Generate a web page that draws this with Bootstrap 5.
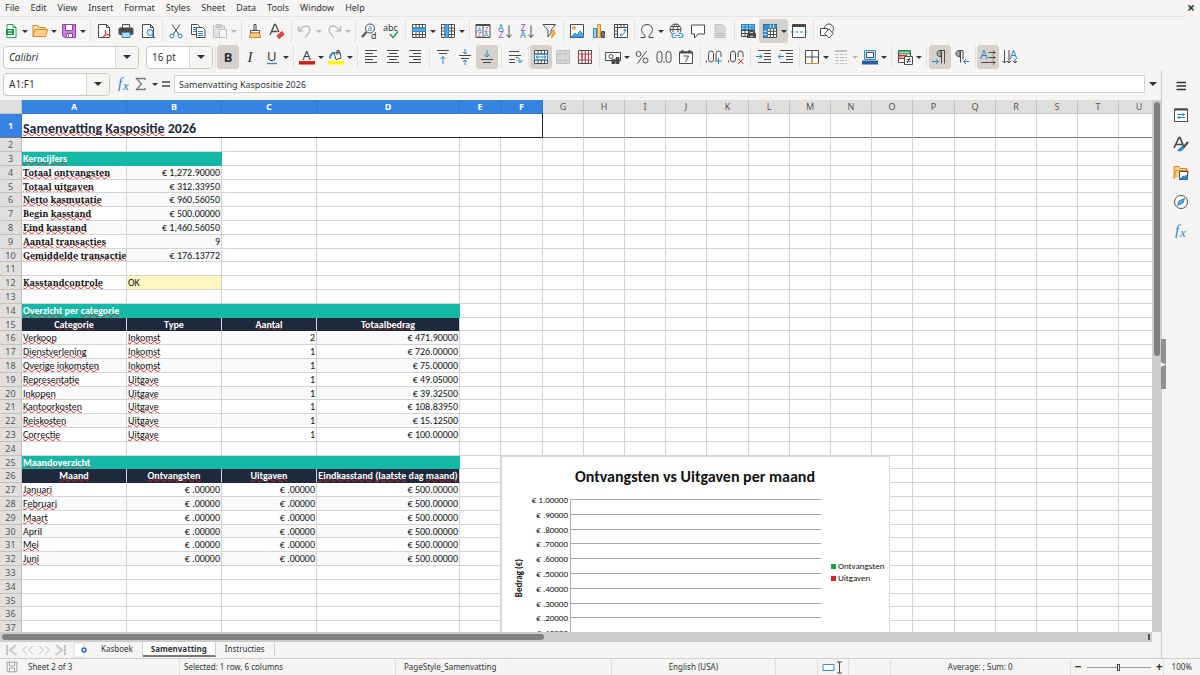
<!DOCTYPE html>
<html lang="nl">
<head>
<meta charset="utf-8">
<meta name="viewport" content="width=device-width, initial-scale=1">
<title>Kasboek - Samenvatting</title>
<link rel="stylesheet" href="https://cdn.jsdelivr.net/npm/bootstrap@5.3.0/dist/css/bootstrap.min.css">
<style>
:root{--ui:#f6f5f4;--line:#d9d6d3;--sel:#3584e4;--teal:#14b8a6;--navy:#1e293b}
body{height:100vh;overflow:hidden;background:var(--ui);color:#2e3436;font:9px/14px "Noto Sans",sans-serif}
button,input{font:inherit;color:inherit}
.menubar,.strip,.formulabar,.hbar,.tabs,.status{flex:none}
.menubar{height:17px;margin:0 16px 1px 0;border-bottom:1px solid #e4e2e0;gap:1px}
.menubar a{color:#2e3436;text-decoration:none;padding:0 5px}
.closer{right:5px;top:2px;border:0;background:none;font-weight:700;font-size:14px;line-height:12px;padding:0}
.strip{height:26px}
.tb{width:22px;height:24px;padding:0;border:0;background:none;display:flex;align-items:center;justify-content:center;flex:none;border-radius:3px}
.tb.split{width:29px;padding-left:3px;justify-content:flex-start}
.tb.split::after,.arrow::after{content:"";border:3px solid transparent;border-top-color:#2e3436;border-bottom:0;margin-left:3px}
.tb.off{opacity:.3}
.tb.on{background:#d5d1cd}
.sp{width:6px;flex:none;display:flex;justify-content:center}
.sp::before{content:"";width:1px;height:22px;background:#e4e2e0}
.sp.slim{width:4px}
.ic{width:16px;height:16px;fill:none;stroke:#4a4a4a;stroke-width:1;flex:none;overflow:visible}
symbol text{stroke:none;fill:#3a3a3a;font-family:"Noto Sans",sans-serif}
.letter-b{font-size:13px;line-height:20px}
.letter-i{font:italic 15px/20px "Liberation Serif",serif}
.combo{height:23px;border:1px solid #cdc7c2;border-radius:4px;background:#fff;overflow:hidden;font-size:10px}
.combo input{border:0;min-width:0;padding:0 5px;outline:0;background:none}
.arrow{width:23px;border:0;border-left:1px solid #dcd8d4;background:var(--ui);padding:0;display:flex;align-items:center;justify-content:center;flex:none}
.arrow::after{border-width:4px;border-bottom:0;margin:0}
.fontbox{width:136px;margin:0 7px 0 3px}.sizebox{width:67px}.namebox{width:107px;margin:0 5px 0 3px}
.formula{height:18px;border:1px solid #d5d1cd;background:#fff;padding:0 4px;outline:0;min-width:0}
.formulabar{height:30px;padding-bottom:2px}
.formulabar .tb{width:18px}
.formulabar .tb.split{width:25px;padding-left:0}
.formulabar .expand{width:16px;border:0}
.side{width:39px;border-left:1px solid #cfccc8;padding-top:4px}
.side .tb{width:24px;height:24px}
.side .tb+.tb{margin-top:5px}
.grip{left:-1px;top:269px;width:5px;height:50px;background:#8f8f8f;color:#fff;font-size:6px;line-height:50px}
.gridbox{background:#fff}
table.cells{table-layout:fixed;border-collapse:separate;border-spacing:0;width:1160px;font:10px/12px Carlito,Lato,sans-serif;color:#111}
.cells th,.cells td{padding:0 1px;height:14px;border-right:1px solid #d4d4d4;border-bottom:1px solid #d4d4d4;white-space:nowrap;overflow:hidden}
.cells tbody th,.cells tbody td{padding-top:1px}
.cells tbody tr:nth-child(5n)>*{height:13px;line-height:11px}
.cells th{background:#e1dfdd;color:#555;font:9px/12px "Noto Sans",sans-serif;text-align:center;border-color:#c3c0bd}
.cells th.hot{background:var(--sel);color:#fff;font-weight:700;border-color:#2f76cc}
.cells tbody tr:first-child>*{height:24px;border-bottom:1px solid #777}
.cells tbody td.title{font:700 14px/16px Carlito,Lato,sans-serif;color:var(--navy);padding-top:7px;border-right:1px solid #222;border-bottom-color:#222}
.cells td.sec{background:var(--teal);color:#fff;font-weight:700;border-color:var(--teal)}
.cells tbody td.head{background:var(--navy);color:#fff;font-weight:700;text-align:center;border-bottom-color:var(--navy);padding-top:0}
.cells td.lab{font-family:"Noto Serif",serif;font-weight:700;font-size:9px}
.cells td.num{text-align:right}
.cells td.band{background:#f8fafc}
.cells td.ok{background:#fef9c3}
.typo{text-decoration:underline wavy #dc2626 1px;text-underline-offset:-1px;text-decoration-skip-ink:none}
.plot{left:501px;top:356px;width:389px;height:220px;background:#fff;border:1px solid #d9d9d9}
.plot svg{display:block;font-family:Carlito,Lato,sans-serif;font-size:9px}
.vbar{width:9px;background:#cdcdcd;padding:2px 1px 0 2px}
.vbar div{height:48%;background:#808080;border-radius:3px}
.hbar{height:10px;background:#cdcdcd;padding:2px;margin-right:9px}
.hbar div{width:542px;background:#808080;border-radius:3px}
.hbar span{width:2px;background:#555}
.tabs{height:16px;font-size:8px}
.tabs a{color:#2e3436;text-decoration:none;padding:0 9px;border-right:1px solid #d0cdca;line-height:14px;height:14px}
.tabs a.cur{background:#fff;font-weight:700;padding:0 8px;border-bottom:2px solid #777;height:15px}
.status{height:17px;border-top:1px solid #d0cdca;line-height:16px;font-size:8px}
.status>span,.status>div{border-right:1px solid #e0dedb}
.zoomer{width:64px;height:12px;appearance:none;background:none;margin:0 5px}
.zoomer::-webkit-slider-runnable-track{height:1px;background:#999}
.zoomer::-webkit-slider-thumb{appearance:none;width:3px;height:7px;margin-top:-3px;background:#fff;border:1px solid #444}
.zb{border:0;background:none;padding:0;font-size:12px;font-weight:700}
.w-sheet{flex:0 0 13%}.w-sel{flex:0 0 18%}.w-style{flex:0 0 18%}.w-sum{flex:0 0 15%}.w-gap{flex:0 0 42px}.w-mode{flex:0 0 31px}
</style>
</head>
<body class="d-flex flex-column">
<svg class="d-none">
<symbol id="new" viewBox="0 0 16 16"><path d="M4 1.500h6l3 3v10H4zM10 1.500v3h3" stroke="#2ca05a" fill="#fff"/><path d="M3.500 6.500h7v5h-7zM3.500 9h7" fill="#2ca05a" stroke="#188a43"/><path d="M5 7.800h4M5 10.300h4" stroke="#fff"/></symbol>
<symbol id="open" viewBox="0 0 16 16"><path d="M1 13.500V2.500h5l1 2h6v2" stroke="#d98a2b" fill="#fbe0b0"/><path d="M1 13.500l2-7h12.500l-2 7z" stroke="#d98a2b" fill="#fccf86"/></symbol>
<symbol id="save" viewBox="0 0 16 16"><path d="M1.500 1.500h13v13h-11l-2-2z" stroke="#9340ad" fill="#c783dd"/><path d="M4.500 1.500h7v6h-7zM5.500 10.500h6v4h-6z" stroke="#9340ad" fill="#fff"/><path d="M7.500 11.500v2"/></symbol>
<symbol id="pdf" viewBox="0 0 16 16"><path d="M2.500 1.500h8l3 3v10h-11zM10.500 1.500v3h3" fill="#fff"/><path d="M7 14c3-3 3-5 2.500-7-1 3 2 5 5 5-3-.5-5 0-7.500 2z" stroke="#dc3545" fill="#fff"/></symbol>
<symbol id="print" viewBox="0 0 16 16"><path d="M4.500 5V1.500h7V5" fill="#fff"/><rect x="1" y="5" width="14" height="6.500" rx="1" fill="#4a4a4a"/><path d="M4 9.500h8v5H4z" stroke="#3b8fc9" fill="#b8dcf2"/></symbol>
<symbol id="preview" viewBox="0 0 16 16"><path d="M2.500 1.500h8l3 3v10h-11zM10.500 1.500v3h3" fill="#fff"/><circle cx="10" cy="9.500" r="3" stroke="#2b86c5" fill="#d8ecf9"/><path d="M12 12l3 3" stroke="#2b86c5" stroke-width="1.500"/></symbol>
<symbol id="cut" viewBox="0 0 16 16"><path d="M4 1.500l7 10M12 1.500L5 11.500"/><circle cx="4" cy="13" r="2" stroke="#2b86c5"/><circle cx="12" cy="13" r="2" stroke="#2b86c5"/></symbol>
<symbol id="copy" viewBox="0 0 16 16"><path d="M1.500 1.500h6l2 2v8h-8z" fill="#fff"/><path d="M3 4.500h4M3 6.500h3M3 8.500h3" stroke="#2b86c5"/><path d="M6.500 4.500h6l2.500 2.500v7.500H6.500z" fill="#fff"/><path d="M8 8.500h5M8 10.500h5M8 12.500h5" stroke="#2b86c5"/></symbol>
<symbol id="paste" viewBox="0 0 16 16"><path d="M1.500 3h11v11.500h-11zM4.500 1.500h5v3h-5z" fill="#bbb"/><path d="M7.500 6.500h7v8h-7z" fill="#fff"/></symbol>
<symbol id="brush" viewBox="0 0 16 16"><path d="M7 1.500h2v6H7zM3.500 7.500h9v2.500h-9z" fill="#fff"/><path d="M3.500 10h9l1 4.500H2.500z" stroke="#d98a2b" fill="#fccf86"/></symbol>
<symbol id="clear" viewBox="0 0 16 16"><path d="M1 12L5.500 1.500h1L10 9M2.500 8.500h6" stroke-width="1.300"/><path d="M8 12.500l5-4 2 3-5 4z" fill="#e04848" stroke="#dc3545"/></symbol>
<symbol id="undo" viewBox="0 0 16 16"><path d="M1.500 3v5h5M1.500 8L6 4c3-2 7-1 7 3 0 2-2 4-5 7.500" stroke-width="1.500"/></symbol>
<symbol id="redo" viewBox="0 0 16 16"><path d="M14.500 3v5h-5M14.500 8L10 4C7 2 3 3 3 7c0 2 2 4 5 7.500" stroke-width="1.500"/></symbol>
<symbol id="find" viewBox="0 0 16 16"><circle cx="9" cy="5.500" r="4.500" fill="#fff"/><path d="M5.500 9L1 14" stroke-width="2"/><text x="6.500" y="8" font-size="8" style="fill:#2b86c5">a</text><text x="10" y="15.500" font-size="9">d</text></symbol>
<symbol id="abc" viewBox="0 0 16 16"><text x="0" y="8" font-size="9">abc</text><path d="M7 11l3 3.500 5-6" stroke="#2ca05a" stroke-width="1.500"/></symbol>
<symbol id="row" viewBox="0 0 16 16"><path d="M1.500 1.500h13v13h-13zM1.500 5h13M1.500 11.500h13M5 1.500v13M8.300 1.500v13M11.500 1.500v13M1.500 8h13" fill="#fff"/><path d="M1.500 5h13v3.500h-13z" fill="#5aa9dd" stroke="#2b86c5"/></symbol>
<symbol id="col" viewBox="0 0 16 16"><path d="M1.500 1.500h13v13h-13zM1.500 5h13M1.500 11.500h13M5 1.500v13M8.300 1.500v13M11.500 1.500v13M1.500 8h13" fill="#fff"/><path d="M5 1.500h3.500v13H5z" fill="#5aa9dd" stroke="#2b86c5"/></symbol>
<symbol id="sort" viewBox="0 0 16 16"><path d="M1 1.500h14v13H1zM8 1.500v13" fill="#fff"/><path d="M1 2h14" stroke-width="2"/><text x="2" y="9" font-size="7" style="fill:#2b86c5">A</text><text x="2.500" y="14.200" font-size="7" style="fill:#a347ba">Z</text><text x="9.500" y="9" font-size="7" style="fill:#a347ba">Z</text><text x="9" y="14.200" font-size="7" style="fill:#2b86c5">A</text></symbol>
<symbol id="az" viewBox="0 0 16 16"><text x="1" y="7.500" font-size="9" style="fill:#2b86c5">A</text><text x="1.500" y="15" font-size="9" style="fill:#a347ba">Z</text><path d="M12 2.500v12M9.500 11.500l2.500 3 2.500-3"/></symbol>
<symbol id="za" viewBox="0 0 16 16"><text x="1.500" y="7.500" font-size="9" style="fill:#a347ba">Z</text><text x="1" y="15" font-size="9" style="fill:#2b86c5">A</text><path d="M12 2.500v12M9.500 11.500l2.500 3 2.500-3"/></symbol>
<symbol id="filter" viewBox="0 0 16 16"><path d="M2 1.500h12.500L10 7v3l-3 4V7z" fill="#fff"/><path d="M12 7l-3 4h2.500l-1 4 4-5H12l1.500-3z" stroke="#d98a2b" fill="#fccf86"/></symbol>
<symbol id="image" viewBox="0 0 16 16"><path d="M1.500 1.500h13v13h-13z" fill="#fff"/><path d="M2 14l4-4 2 2 3-4 3.500 4v2z" fill="#5aa9dd" stroke="#2b86c5"/><circle cx="5" cy="5" r="1.300" stroke="#d98a2b" fill="#fccf86"/></symbol>
<symbol id="chart" viewBox="0 0 16 16"><path d="M2.500 5.500h3v9h-3z" stroke="#2b86c5" fill="#9fcdec"/><path d="M6.500 1.500h3v13h-3z" stroke="#d98a2b" fill="#fccf86"/><path d="M10.500 8.500h3v6h-3z" fill="#777"/></symbol>
<symbol id="pivot" viewBox="0 0 16 16"><path d="M1.500 1.500h13v13h-13zM1.500 4.500h13M4.500 1.500v13M8 1.500v3M11 1.500v3M1.500 8h3M1.500 11h3" fill="#fff"/><path d="M7 12c4 0 5-2 5-5M10.500 8l1.500-2 1.500 2M8.500 10.500L7 12l1.500 1.500" stroke="#2b86c5"/></symbol>
<symbol id="omega" viewBox="0 0 16 16"><path d="M1.500 14.500H6V12.500C.5 9 2 1.500 8 1.500S15.500 9 10 12.500v2h4.500"/></symbol>
<symbol id="link" viewBox="0 0 16 16"><circle cx="7.500" cy="6.500" r="5.500"/><path d="M2 6.500h11M3 3.500h9M7.500 1C4 5 4 9 7.500 12M7.500 1C11 5 11 9 7.500 12"/><path d="M5 9.500h11v6H3z" fill="#f6f5f4" stroke="none"/><path d="M7.500 10.500H6a2 2 0 000 4h2.500M11 10.500h2a2 2 0 010 4h-2.500M7 12.500h5" stroke="#3b9be0" stroke-width="1.200"/></symbol>
<symbol id="note" viewBox="0 0 16 16"><path d="M1.500 2h13v9H8l-3.500 4v-4h-3z" fill="#fff"/></symbol>
<symbol id="hf" viewBox="0 0 16 16"><path d="M3 1.500h7l3 3v10H3zM5 10.500h6v2H5z" fill="#999"/></symbol>
<symbol id="area" viewBox="0 0 16 16"><path d="M1.500 1.500h13v12h-13zM1.500 4.500h13M1.500 7.500h13M1.500 10.500h13M5 1.500v12M8.500 1.500v12M12 1.500v12" fill="#fff"/><path d="M1.500 1.500h13v5h-13z" fill="#8cc4ea" stroke="#2b86c5"/><path d="M5 1.500v5M8.500 1.500v5M12 1.500v5M1.500 4h13" stroke="#2b86c5"/><path d="M7.500 10.500h8v4h-8z" fill="#4a4a4a"/><path d="M9.500 8.500h4v2h-4zM9.500 12.500h4v2h-4z" fill="#b8dcf2"/></symbol>
<symbol id="freeze" viewBox="0 0 16 16"><path d="M1.500 1.500h13v13h-13zM1.500 5h13M1.500 8.300h13M1.500 11.500h13M5 1.500v13M8.300 1.500v13M11.500 1.500v13" fill="#fff"/><path d="M1.500 1.500h13V5H5v9.500H1.500z" fill="#3b94d2" stroke="#2173ae"/><path d="M1.500 8.300H5M1.500 11.500H5M8.300 1.500V5M11.500 1.500V5" stroke="#cfe6f5"/></symbol>
<symbol id="split" viewBox="0 0 16 16"><path d="M1.500 1.500h13v13h-13z" fill="#fff"/><path d="M1.500 2.500h13" stroke-width="3"/><path d="M0 9h16" stroke="#2b86c5" stroke-dasharray="3 1.500"/></symbol>
<symbol id="shapes" viewBox="0 0 16 16"><circle cx="10" cy="5.500" r="4.500" fill="#fff"/><path d="M1.500 5.500h7v7h-7z" fill="#fff"/><path d="M10 6l4.300 4.500L10 15l-4.300-4.500z" fill="#fff"/></symbol>
<symbol id="ul" viewBox="0 0 16 16"><text x="3" y="12" font-size="13">U</text><path d="M3 14.500h10" stroke="#3b8fd0" stroke-width="1.500"/></symbol>
<symbol id="fc" viewBox="0 0 16 16"><text x="3.500" y="10.500" font-size="13">A</text><path d="M0 13.800h16" stroke="#c9211e" stroke-width="3.500"/></symbol>
<symbol id="hl" viewBox="0 0 16 16"><path d="M6 4l6-1 1 6-5 1.500z" fill="#fff"/><path d="M9 6V1.500h2V5"/><path d="M2 9.500c0-5 3-6 5-5" stroke="#2b86c5" stroke-width="2"/><path d="M0 13.800h16" stroke="#ff0" stroke-width="3.500"/></symbol>
<symbol id="left" viewBox="0 0 16 16"><path d="M2 1.500h12M2 4.500h8M2 7.500h12M2 10.500h8M2 13.500h12"/></symbol>
<symbol id="center" viewBox="0 0 16 16"><path d="M2 1.500h12M4 4.500h8M2 7.500h12M4 10.500h8M2 13.500h12"/></symbol>
<symbol id="right" viewBox="0 0 16 16"><path d="M2 1.500h12M6 4.500h8M2 7.500h12M6 10.500h8M2 13.500h12"/></symbol>
<symbol id="top" viewBox="0 0 16 16"><path d="M2 1.500h12M4 4.500h8"/><path d="M8 15V7.500M5.500 10L8 7.500l2.500 2.500" stroke="#2b86c5"/></symbol>
<symbol id="mid" viewBox="0 0 16 16"><path d="M2 6.500h12M4 9.500h8"/><path d="M8 0v5M6 3l2 2 2-2M8 16v-5M6 13l2-2 2 2" stroke="#2b86c5"/></symbol>
<symbol id="bot" viewBox="0 0 16 16"><path d="M2 10.500h12M4 13.500h8"/><path d="M8 1v7M5.500 5.500L8 8l2.500-2.500" stroke="#2b86c5"/></symbol>
<symbol id="wrap" viewBox="0 0 16 16"><path d="M2 2.500h10M2 6.500h12M2 10.500h6M2 13.500h6"/><path d="M9 8.500c3 0 4 1 4 4M10.500 11l2.500 3 2.500-3" stroke="#2b86c5"/></symbol>
<symbol id="merge" viewBox="0 0 16 16"><path d="M1.500 1.500h13v13h-13zM1.500 5h13M1.500 11h13M5 1.500V5M8.300 1.500V5M11.500 1.500V5M5 11v3.500M8.300 11v3.500M11.500 11v3.500" fill="#fff"/><path d="M1.500 5h13v6h-13zM3 8h10M5 6.500L3 8l2 1.500M11 6.500L13 8l-2 1.500" stroke="#2b86c5"/></symbol>
<symbol id="merge2" viewBox="0 0 16 16"><path d="M1.500 1.500h13v13h-13zM1.500 5h13M1.500 11h13M5 1.500V5M11 1.500V5M5 11v3.500M11 11v3.500" fill="#999"/></symbol>
<symbol id="unmerge" viewBox="0 0 16 16"><path d="M1.500 1.500h13v13h-13zM5 1.500v13M8.300 1.500v13M11.500 1.500v13" fill="#fff"/><path d="M1.500 5h13v6h-13zM5 5v6M8.300 5v6M11.500 5v6" stroke="#dc3545"/></symbol>
<symbol id="money" viewBox="0 0 16 16"><path d="M.5 3.500h15v8H.5z" fill="#fff"/><circle cx="6" cy="7.500" r="2"/><path d="M7 10.500h3v4H7zM11 8.500h3v6h-3z" fill="#4a4a4a"/></symbol>
<symbol id="pct" viewBox="0 0 16 16"><circle cx="4.500" cy="5" r="2.500"/><circle cx="11.500" cy="11.500" r="2.500"/><path d="M12.500 2l-9 12.500"/></symbol>
<symbol id="num" viewBox="0 0 16 16"><rect x="1" y="2.500" width="5" height="11" rx="2.500"/><rect x="10" y="2.500" width="5" height="11" rx="2.500"/><path d="M8 12v2"/></symbol>
<symbol id="date" viewBox="0 0 16 16"><path d="M1.500 3h13v11.500h-13z" fill="#fff"/><path d="M1.500 3.500h13M4.500 1v3M11.500 1v3" stroke-width="2"/><path d="M5.500 7h5l-3 6"/></symbol>
<symbol id="add" viewBox="0 0 16 16"><rect x="2.500" y="2" width="5" height="11" rx="2.500"/><path d="M10 12.500V4.500a2.500 2.500 0 015 0V8"/><path d="M.5 11.500v2"/><path d="M12.500 9v6M9.500 12h6" stroke="#2b86c5"/></symbol>
<symbol id="del" viewBox="0 0 16 16"><rect x="2.500" y="2" width="5" height="11" rx="2.500"/><path d="M10 8V4.500a2.500 2.500 0 015 0V8"/><path d="M.5 11.500v2"/><path d="M10 9.500l5.500 5.500M15.500 9.500L10 15" stroke="#dc3545"/></symbol>
<symbol id="ind" viewBox="0 0 16 16"><path d="M2 1.500h13M8 4.500h7M8 7.500h7M8 10.500h7M2 13.500h13"/><path d="M0 7.500h6M3.500 5L6 7.500 3.500 10" stroke="#2b86c5"/></symbol>
<symbol id="outd" viewBox="0 0 16 16"><path d="M2 1.500h13M8 4.500h7M8 7.500h7M8 10.500h7M2 13.500h13"/><path d="M6 7.500H0M2.500 5L0 7.500 2.500 10" stroke="#2b86c5"/></symbol>
<symbol id="borders" viewBox="0 0 16 16"><path d="M1.500 1.500h13v13h-13zM8 1.500v13M1.500 8h13" fill="#fff"/><path d="M1.500 14.500h13" stroke="#d98a2b"/></symbol>
<symbol id="lines" viewBox="0 0 16 16"><path d="M2 2h12" stroke-width="2"/><path d="M2 5.500h12M2 8.500h12M2 11.500h12M2 14.500h12" stroke-dasharray="4 1"/></symbol>
<symbol id="bc" viewBox="0 0 16 16"><path d="M2.500 1.500h11v9h-11z" fill="#b8dcf2" stroke="#3b8fc9"/><path d="M4.500 3.500h7v5h-7z" fill="#fff"/><path d="M0 13.500h16" stroke="#2a6099" stroke-width="4"/></symbol>
<symbol id="cond" viewBox="0 0 16 16"><path d="M1.500 1.500h12v12h-12z" fill="#fff"/><path d="M2 2h11v3H2z" stroke="#2ca05a" fill="#8fd6aa"/><path d="M2 6.500h8v3H2z" stroke="#dc3545" fill="#f3a0a0"/><path d="M7.500 7.500h8v8h-8zM9.500 10.500h4M9.500 12.500h4M13 9l-3 5" fill="#fff"/></symbol>
<symbol id="ltr" viewBox="0 0 16 16"><path d="M13 1.500H8c-4 0-4 6 0 6h1V1.500zM9.500 1.500v13M12.500 1.500v13" fill="#aaa"/><path d="M0 12.500h6M4 10l2.500 2.500L4 15" stroke="#2b86c5"/></symbol>
<symbol id="rtl" viewBox="0 0 16 16"><path d="M9 1.500H5c-4 0-4 6 0 6h1V1.500zM6.500 1.500v12M9 1.500v9" fill="#aaa"/><path d="M15.500 12.500h-6M12 10l-2.500 2.500L12 15" stroke="#2b86c5"/></symbol>
<symbol id="th" viewBox="0 0 16 16"><text x="0" y="9.500" font-size="12" style="fill:#2b86c5">A</text><path d="M8.500 3.500H15M13 1.500l2 2-2 2M8.500 8.500H15M13 6.500l2 2-2 2M1 13.500h14M13 11.500l2 2-2 2"/></symbol>
<symbol id="tv" viewBox="0 0 16 16"><text x="7.500" y="10" font-size="12" style="fill:#2b86c5">A</text><path d="M2.500 1v13M.5 12l2 2 2-2M7 1v13M5 12l2 2 2-2M13 10v4M11 12l2 2 2-2"/></symbol>
<symbol id="fx" viewBox="0 0 16 16"><text x="2" y="12" font-size="15" font-style="italic" style="fill:#2b86c5;font-family:'Liberation Serif',serif">f</text><text x="7" y="14" font-size="13" font-style="italic" style="fill:#2b86c5;font-family:'Liberation Serif',serif">x</text></symbol>
<symbol id="sum" viewBox="0 0 16 16"><path d="M12 4V2.500H3.500L8.500 8l-5 5.500H12V12" stroke="#777" stroke-width="1.300"/></symbol>
<symbol id="eq" viewBox="0 0 16 16"><path d="M4 6h8M4 10h8" stroke-width="1.700"/></symbol>
<symbol id="menu" viewBox="0 0 16 16"><path d="M3.500 4.500h9.500M3.500 8h9.500M3.500 11.500h9.500" stroke-width="1.300" stroke="#2e3436"/></symbol>
<symbol id="props" viewBox="0 0 16 16"><path d="M1.500 2h13v12.500h-13z" fill="#fff"/><path d="M1.500 2.500h13" stroke-width="2"/><path d="M4 7.500h8M4 10.500h8M10 6v3M6 9v3" stroke="#2b86c5"/></symbol>
<symbol id="styles" viewBox="0 0 16 16"><path d="M1 12L6 1.500h1l4 10M3 8.500h6" stroke-width="1.700"/><path d="M15 6l-5 6" stroke-width="2"/><path d="M10.500 11c-2-1-3 1-6 3.500 3 1 6 0 6-3.500z" fill="#2b86c5" stroke="#2b86c5"/></symbol>
<symbol id="gallery" viewBox="0 0 16 16"><path d="M1 13.500V1.500h5l1 2h7v2M1 13.500l2-8h12v3" stroke="#d98a2b" fill="#fccf86"/><path d="M6.500 6.500h8v8h-8z" fill="#fff"/><path d="M7 14l3-3 1.500 1 1.500-2 1.500 2v2z" fill="#2b86c5" stroke="#2b86c5"/></symbol>
<symbol id="nav" viewBox="0 0 16 16"><circle cx="8" cy="8" r="6.500" fill="#fff"/><path d="M11.500 4.500L10 9l-5.500 2.500L6 7z" fill="#5aa9dd" stroke="#2b86c5"/></symbol>
<symbol id="first" viewBox="0 0 16 16"><path d="M3 3v10M12 3L6 8l6 5" stroke-width="2"/></symbol>
<symbol id="prev" viewBox="0 0 16 16"><path d="M7 4L2.500 8 7 12M13 4L8.500 8l4.500 4"/></symbol>
<symbol id="next" viewBox="0 0 16 16"><path d="M3 4l4.500 4L3 12M9 4l4.500 4L9 12"/></symbol>
<symbol id="last" viewBox="0 0 16 16"><path d="M13 3v10M4 3l6 5-6 5" stroke-width="2"/></symbol>
<symbol id="sheet" viewBox="0 0 16 16"><path d="M2 1h10v14H2z" fill="#fff" stroke="#ddd"/><circle cx="12" cy="8" r="2" stroke="#2a6db8" stroke-width="1.500"/></symbol>
<symbol id="disk" viewBox="0 0 16 16"><path d="M1.500 1.500h13v13h-13zM4.500 1.500v5h7v-5M4.500 14.500v-5h7v5" stroke="#888"/></symbol>
</svg>

<nav class="menubar d-flex align-items-center">
<a href="#">File</a><a href="#">Edit</a><a href="#">View</a><a href="#">Insert</a><a href="#">Format</a><a href="#">Styles</a><a href="#">Sheet</a><a href="#">Data</a><a href="#">Tools</a><a href="#">Window</a><a href="#">Help</a>
</nav>
<button class="closer position-absolute" aria-label="Close">×</button>

<div class="strip d-flex align-items-center" data-bar="new> open> save> | pdf print preview | cut copy paste>- | brush clear | undo>- redo>- | find abc | row> col> | sort az za filter | image chart pivot , omega> link note hf- | area freeze>+ split | shapes"></div>

<div class="strip d-flex align-items-center">
<div class="combo fontbox d-flex"><input class="flex-grow-1 fst-italic" aria-label="Font name" value="Calibri"><button class="arrow" aria-label="Fonts"></button></div>
<div class="combo sizebox d-flex"><input class="flex-grow-1" aria-label="Font size" value="16 pt"><button class="arrow" aria-label="Sizes"></button></div>
<div class="d-flex align-items-center" data-bar=", B+ I ul> | fc> hl> | left center right | top mid bot+ | wrap , merge+ merge2- unmerge | money> pct num date | add del | ind outd , borders> lines>- bc> | cond> | ltr+ rtl , th+ tv"></div>
</div>

<div class="d-flex flex-grow-1 overflow-hidden">
<main class="flex-grow-1 d-flex flex-column overflow-hidden">
<div class="formulabar d-flex align-items-center">
<div class="combo namebox d-flex"><input class="flex-grow-1" aria-label="Name box" value="A1:F1"><button class="arrow" aria-label="Names"></button></div>
<div class="d-flex" data-bar="fx sum>"></div><svg class="ic"><use href="#eq"/></svg>
<input class="formula flex-grow-1" aria-label="Formula" value="Samenvatting Kaspositie 2026">
<button class="arrow expand" aria-label="Expand formula bar"></button>
</div>
<div class="d-flex flex-grow-1 overflow-hidden">
<div class="gridbox flex-grow-1 position-relative overflow-hidden">
<table class="cells"><colgroup id="cols"></colgroup><thead><tr id="letters"></tr></thead><tbody id="rows"></tbody></table>
<div class="plot position-absolute"><svg width="387" height="218" id="plot" fill="#111">
<text x="193" y="25" font-size="16" font-weight="700" text-anchor="middle">Ontvangsten vs Uitgaven per maand</text>
<text transform="translate(20 121) rotate(-90)" text-anchor="middle" font-weight="700">Bedrag (€)</text>
<path d="M329 107h5v5h-5z" fill="#16a34a"/><path d="M329 119h5v5h-5z" fill="#dc2626"/>
<text x="336" y="112">Ontvangsten</text><text x="336" y="124">Uitgaven</text>
</svg></div>
</div>
<div class="vbar"><div></div></div>
</div>
<div class="hbar d-flex justify-content-between"><div></div><span></span></div>
<div class="tabs d-flex ps-1">
<div class="d-flex opacity-25"><svg class="ic"><use href="#first"/></svg><svg class="ic"><use href="#prev"/></svg><svg class="ic"><use href="#next"/></svg><svg class="ic"><use href="#last"/></svg></div>
<svg class="ic ms-1 me-1"><use href="#sheet"/></svg>
<a href="#">Kasboek</a><a href="#" class="cur">Samenvatting</a><a href="#">Instructies</a>
</div>
</main>
<aside class="side d-flex flex-column align-items-center position-relative" data-bar="menu props styles gallery nav fx"><span class="grip position-absolute">▶</span></aside>
</div>

<footer class="status d-flex align-items-center">
<svg class="ic mx-1"><use href="#disk" x="2" y="2" width="12" height="12"/></svg>
<span class="w-sheet ps-1">Sheet 2 of 3</span>
<span class="w-sel ps-1">Selected: 1 row, 6 columns</span>
<span class="w-style ps-2">PageStyle_Samenvatting</span>
<span class="flex-grow-1 text-center">English (USA)</span>
<span class="w-gap">&nbsp;</span>
<span class="w-mode d-flex"><svg class="ic m-auto" viewBox="0 0 16 16"><path d="M-2 5.500h11v6H-2z" stroke="#3b8fd0" fill="#fff"/><path d="M12 3h5M12 14h5M14.500 3v11"/></svg></span>
<span class="w-gap">&nbsp;</span>
<span class="w-sum text-center">Average: ; Sum: 0</span>
<div class="d-flex align-items-center ps-1"><button class="zb" aria-label="Zoom out">−</button><input class="zoomer" type="range" aria-label="Zoom" value="50"><button class="zb" aria-label="Zoom in">+</button></div>
<span class="px-2 border-0">100%</span>
</footer>

<script src="https://cdn.jsdelivr.net/npm/bootstrap@5.3.0/dist/js/bootstrap.bundle.min.js"></script>
<script>
// Toolbars: "|" and "," are separators, ">" adds a menu arrow, "+" is pressed, "-" is disabled.
document.querySelectorAll('[data-bar]').forEach(bar => {
  const html = bar.dataset.bar.split(' ').map(k => {
    if (k === '|') return '<span class="sp"></span>';
    if (k === ',') return '<span class="sp slim"></span>';
    const id = k.replace(/[>+-]/g, '');
    const cls = (k.includes('>') ? ' split' : '') + (k.includes('+') ? ' on' : '') + (k.includes('-') ? ' off' : '');
    const face = id === 'B' ? '<b class="letter-b">B</b>' : id === 'I' ? '<i class="letter-i">I</i>' : `<svg class="ic"><use href="#${id}"/></svg>`;
    return `<button class="tb${cls}" aria-label="${id}">${face}</button>`;
  }).join('');
  bar.insertAdjacentHTML('beforeend', html);
});

const widths = [22,105,95,95,143,41,42,41,41,41,41,42,41,41,41,41,42,41,41,41,41,41];
cols.innerHTML = widths.map(w => `<col style="width:${w}px">`).join('');
letters.innerHTML = '<th></th>' + [...'ABCDEFGHIJKLMNOPQRSTU'].map((c, i) => `<th class="${i < 6 ? 'hot' : ''}">${c}</th>`).join('');

const known = ['Type', 'OK', 'April', 'Begin', 'per', 'dag', '2026'];
const mark = t => t.split(' ').map(w => /[€\d]/.test(w) || known.includes(w) || !w ? w : `<span class="typo">${w}</span>`).join(' ');
const cell = (t, cls = '', span = 1) => `<td class="${cls}" colspan="${span}">${mark(t)}</td>`;
const data = {
  1: ['title', 6, 'Samenvatting Kaspositie 2026'], 3: ['sec', 2, 'Kerncijfers'],
  14: ['sec', 4, 'Overzicht per categorie'], 25: ['sec', 4, 'Maandoverzicht']
};
const pairs = {4:['Totaal ontvangsten','€ 1,272.90000'],5:['Totaal uitgaven','€ 312.33950'],6:['Netto kasmutatie','€ 960.56050'],7:['Begin kasstand','€ 500.00000'],8:['Eind kasstand','€ 1,460.56050'],9:['Aantal transacties','9'],10:['Gemiddelde transactie','€ 176.13772']};
const cats = {16:['Verkoop','Inkomst','2','€ 471.90000'],17:['Dienstverlening','Inkomst','1','€ 726.00000'],18:['Overige inkomsten','Inkomst','1','€ 75.00000'],19:['Representatie','Uitgave','1','€ 49.05000'],20:['Inkopen','Uitgave','1','€ 39.32500'],21:['Kantoorkosten','Uitgave','1','€ 108.83950'],22:['Reiskosten','Uitgave','1','€ 15.12500'],23:['Correctie','Uitgave','1','€ 100.00000']};
['Januari','Februari','Maart','April','Mei','Juni'].forEach((m, i) => cats[27 + i] = [m, '€ .00000', '€ .00000', '€ 500.00000']);
const heads = {15:['Categorie','Type','Aantal','Totaalbedrag'],26:['Maand','Ontvangsten','Uitgaven','Eindkasstand (laatste dag maand)']};
let out = '';
for (let r = 1; r <= 37; r++) {
  let used = 0, h = '';
  const band = r % 2 ? '' : ' band';
  if (data[r]) { const [c, s, t] = data[r]; h = cell(t, c, s); used = s; }
  else if (pairs[r]) { h = cell(pairs[r][0], 'lab' + band) + cell(pairs[r][1], 'num band'); used = 2; }
  else if (r === 12) { h = cell('Kasstandcontrole', 'lab') + cell('OK', 'ok'); used = 2; }
  else if (heads[r]) { h = heads[r].map(t => cell(t, 'head')).join(''); used = 4; }
  else if (cats[r]) { h = cats[r].map(t => cell(t, (/^[€\d]/.test(t) ? 'num' : '') + band)).join(''); used = 4; }
  out += `<tr><th class="${r === 1 ? 'hot' : ''}">${r}</th>${h}${'<td></td>'.repeat(21 - used)}</tr>`;
}
rows.innerHTML = out;

// Value axis of the chart
let axis = '<path d="M68.500 42v176" stroke="#b3b3b3"/>';
['1.00000','.90000','.80000','.70000','.60000','.50000','.40000','.30000','.20000','.10000'].forEach((v, i) => {
  const y = 42 + Math.round(i * 14.8);
  axis += `<path d="M68 ${y}.5h251" stroke="#a6a6a6"/><text x="66" y="${y + 4}" text-anchor="end">€ ${v}</text>`;
});
plot.insertAdjacentHTML('beforeend', axis);
</script>
</body>
</html>
